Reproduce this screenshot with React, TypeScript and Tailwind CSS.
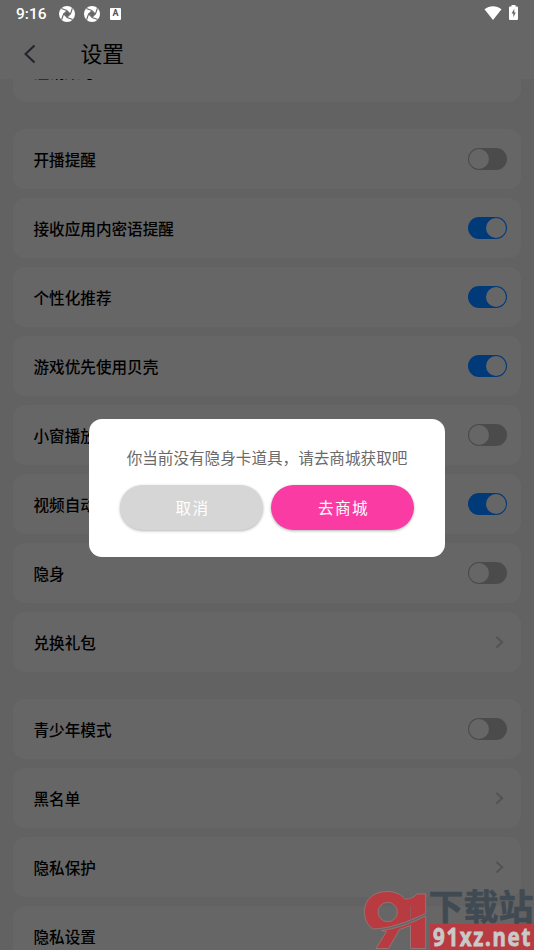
import React from 'react';

type Row = { label: string; kind: 'on' | 'off' | 'link' | 'none' };

const topGroup: Row[] = [
  { label: '开播提醒', kind: 'off' },
  { label: '接收应用内密语提醒', kind: 'on' },
  { label: '个性化推荐', kind: 'on' },
  { label: '游戏优先使用贝壳', kind: 'on' },
  { label: '小窗播放', kind: 'off' },
  { label: '视频自动播放', kind: 'on' },
  { label: '隐身', kind: 'off' },
  { label: '兑换礼包', kind: 'link' },
];

const bottomGroup: Row[] = [
  { label: '青少年模式', kind: 'off' },
  { label: '黑名单', kind: 'link' },
  { label: '隐私保护', kind: 'link' },
  { label: '隐私设置', kind: 'none' },
];

function Toggle({ on }: { on: boolean }) {
  return (
    <span
      className={`flex h-[22px] w-[39px] items-center rounded-full p-px ${
        on ? 'justify-end bg-[#003a78]' : 'justify-start bg-[#4b4b4b]'
      }`}
    >
      <span className="size-5 rounded-full bg-[#666666]" />
    </span>
  );
}

function Card({ row }: { row: Row }) {
  return (
    <div className="flex h-[60px] shrink-0 items-center justify-between rounded-xl bg-[#666666] pr-[14px] pl-[20.5px]">
      <span className="text-[15.6px] leading-6 font-medium text-black">{row.label}</span>
      {row.kind === 'on' && <Toggle on />}
      {row.kind === 'off' && <Toggle on={false} />}
      {row.kind === 'link' && (
        <svg className="mr-[3px]" width="9" height="13" viewBox="0 0 9 13" fill="none" stroke="#535353" strokeWidth="2">
          <path d="M1.4 1 7.2 6.200l-5.800 5.200" />
        </svg>
      )}
    </div>
  );
}

function Aperture() {
  return (
    <svg className="-mt-px" width="16" height="16" viewBox="0 0 16 16">
      <circle cx="8" cy="8" r="8" fill="#fff" />
      <path d="M8 4.400 11.600 8 8 11.600 4.400 8Z" fill="#666" stroke="#666" strokeWidth="0.800" />
      <g stroke="#666" strokeWidth="1.100" fill="none">
        <path d="M8 4.600 2.300 2.600M11.400 8 13.400 2.300M8 11.400 13.700 13.400M4.600 8 2.600 13.700" />
      </g>
    </svg>
  );
}

function StatusBar() {
  return (
    <div className="flex h-7 items-center pr-4 pl-4 text-white">
      <span className="w-[43px] font-[Roboto] text-[15.5px] leading-5 font-medium">9:16</span>
      <Aperture />
      <span className="w-[9px]" />
      <Aperture />
      <span className="ml-[10px] flex h-3 w-[11px] items-center justify-center rounded-[1px] bg-white font-[Roboto] text-[9px] font-bold text-[#555]">
        A
      </span>
      <svg className="-mt-[2px] ml-auto" width="18" height="15" viewBox="0 0 18 15" fill="#fff">
        <path d="M.5 3.200C5.600-.700 12.400-.700 17.500 3.200L9 14Z" />
      </svg>
      <svg className="-mt-[3px] ml-[7px]" width="9" height="15" viewBox="0 0 9 15">
        <path d="M2.500 0h4v1.500H8q1 0 1 1V14q0 1-1 1H1q-1 0-1-1V2.500q0-1 1-1h1.500Z" fill="#fff" />
        <path d="M5.300 3.800 2.600 8.400h1.700v3.800l2.500-4.800H5.300Z" fill="#666" />
      </svg>
    </div>
  );
}

function Watermark() {
  return (
    <div className="absolute right-0 bottom-0 flex h-[60px] w-[170px]">
      <svg width="64" height="60" viewBox="0 0 64 60" stroke="#977c7d" strokeWidth="0.800" fill="#b73b40">
        <path
          fillRule="evenodd"
          d="M9.500 39C4 36 .5 30 .5 21.500C.5 9 10 1.500 23 1.500C32 1.500 38 5 40.500 9C46 9 50 7.500 53 4H61.700V23.300C53 27.500 43 32 34 34.500C25 37.500 17 38.500 9.500 39ZM14 22A9.700 9.700 0 1 0 33.400 22A9.700 9.700 0 1 0 14 22Z"
        />
        <path d="M17.500 40.500C33 38.500 48 33 61.700 26V58.500H46.500V35.500L35.500 39.500L24.500 58.500H12L22.500 41.500Z" />
        <path d="M46.500 16V29" stroke="#8f6062" fill="none" />
      </svg>
      <div className="ml-[2px] flex w-[104px] flex-col">
        <svg width="104" height="34" viewBox="0 0 104 34" className="overflow-visible">
          <text
            x="-1.500"
            y="30"
            textLength="105"
            lengthAdjust="spacingAndGlyphs"
            fill="#404a52"
            className="font-['Noto_Sans_CJK_SC',sans-serif] text-[35px] font-bold"
            stroke="#404a52"
            strokeWidth="0.600"
          >
            下载站
          </text>
        </svg>
        <div className="flex h-[26px] items-center bg-[#b73b40] pl-[2px]">
          <svg width="102" height="26" viewBox="0 0 102 26" className="overflow-visible">
            <text
              x="1"
              y="21.500"
              textLength="99"
              lengthAdjust="spacingAndGlyphs"
              fill="#c9c9c9"
              stroke="#c9c9c9"
              strokeWidth="0.800"
              className="font-['Noto_Sans',sans-serif] text-[25px] font-bold tracking-[2px]"
            >
              91xz.net
            </text>
          </svg>
        </div>
      </div>
    </div>
  );
}

export default function App() {
  return (
    <div className="relative flex h-[950px] w-[534px] flex-col overflow-hidden bg-[#626262] font-['Noto_Sans_CJK_SC',sans-serif]">
      <header className="h-[79px] shrink-0 bg-[#666666]">
        <StatusBar />
        <div className="flex h-[51px] items-center pl-[23.500px]">
          <svg width="12" height="20" viewBox="0 0 12 20" fill="none" stroke="#20232c" strokeWidth="2">
            <path d="M10.500 1.500 1.500 10l9 8.500" />
          </svg>
          <h1 className="-mt-[2px] ml-[45px] text-[21.800px] leading-8 font-normal text-black">设置</h1>
        </div>
      </header>

      <main className="flex min-h-0 flex-1 flex-col overflow-hidden px-[13px]">
        <div className="flex h-[23px] shrink-0 flex-col justify-end overflow-hidden rounded-b-xl bg-[#666666] pb-px">
          <Card row={{ label: '注销账号', kind: 'none' }} />
        </div>
        <section className="mt-[27px] flex flex-col gap-[9px]">
          {topGroup.map((row) => (
            <Card key={row.label} row={row} />
          ))}
        </section>
        <section className="mt-[27px] flex flex-col gap-[9px]">
          {bottomGroup.map((row) => (
            <Card key={row.label} row={row} />
          ))}
        </section>
      </main>

      <div
        role="dialog"
        className="absolute top-[419px] left-[89px] flex h-[137.500px] w-[356px] flex-col items-center rounded-[13px] bg-white pt-[26px]"
      >
        <p className="text-[15.600px] leading-6 whitespace-nowrap text-[#6a6a6a]">你当前没有隐身卡道具，请去商城获取吧</p>
        <div className="mt-4 flex gap-2 text-[15.600px] tracking-[1.400px] text-white">
          <button className="h-[45px] w-[143px] rounded-full bg-[#d6d6d6] pl-[2px] shadow-[0_1px_3px_rgba(0,0,0,0.3)]">取消</button>
          <button className="h-[45px] w-[143px] rounded-full bg-[#fa3ba3] pl-[2px] shadow-[0_1px_3px_rgba(0,0,0,0.3)]">去商城</button>
        </div>
      </div>

      <Watermark />
    </div>
  );
}
